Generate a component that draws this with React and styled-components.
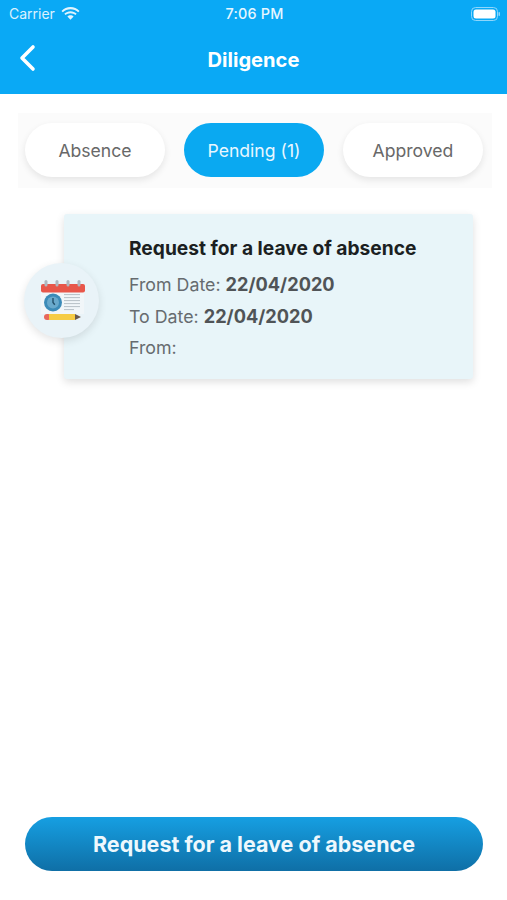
import React from "react";
import styled, { createGlobalStyle } from "styled-components";

const Global = createGlobalStyle`
  html, body { margin: 0; padding: 0; background: #fff; }
  body { font-family: Inter, "Liberation Sans", sans-serif; }
`;
const Page = styled.div`
  width: 507px; height: 900px; display: flex; flex-direction: column; background: #fff; overflow: hidden;
`;
const Header = styled.header`
  height: 94px; flex: none; background: #0aa9f5; color: #fff; display: flex; flex-direction: column;
`;
const StatusBar = styled.div`
  height: 27px; display: grid; grid-template-columns: 1fr auto 1fr; align-items: center; padding: 0 7px 0 9px;
  font-size: 14px; color: #e6f6ff;
`;
const Carrier = styled.div`display: flex; align-items: center; gap: 6px; font-size: 14px; opacity: .95;`;
const Clock = styled.div`font-weight: 500; font-size: 14.4px; letter-spacing: .2px;`;
const Battery = styled.div`justify-self: end; display: flex;`;
const NavBar = styled.div`
  height: 67px; display: flex; align-items: center; justify-content: center; position: relative;
  font-size: 20.1px; font-weight: 700; padding-bottom: 1px; box-sizing: border-box;
`;
const Back = styled.svg`position: absolute; left: 18px; top: 17px;`;
const TabStrip = styled.div`
  margin: 19px 15px 0 18px; height: 75px; padding: 10px 9px 0 7px; box-sizing: border-box;
  background: #fbfbfb; display: flex; justify-content: space-between;
`;
const Tab = styled.div`
  width: 140px; height: 54px; border-radius: 27px; display: flex; align-items: center; justify-content: center;
  font-size: 17.6px; background: ${p => (p.$active ? "#0aa9f1" : "#fff")}; color: ${p => (p.$active ? "#e8f7ff" : "#686868")};
  box-shadow: ${p => (p.$active ? "none" : "0 3px 7px rgba(0,0,0,.09)")};
`;
const Item = styled.div`position: relative; margin: 26px 34px 0 64px;`;
const Card = styled.div`
  height: 165px; background: #e8f5f9; border-radius: 3px; padding: 21px 0 0 65px; box-sizing: border-box;
  box-shadow: 0 3px 9px rgba(0,0,0,.13); display: flex; flex-direction: column;
`;
const Title = styled.div`font-size: 19.2px; font-weight: 700; color: #1b1f22; line-height: 26px; margin-bottom: 8px;`;
const Line = styled.div`font-size: 17.8px; color: #666b6f; line-height: 31.5px;`;
const Value = styled.b`font-weight: 700; color: #505457; font-size: 18.2px;`;
const Avatar = styled.div`
  position: absolute; left: -40px; top: 49px; width: 75px; height: 75px; border-radius: 50%;
  background: #e9f3f8; box-shadow: 0 3px 9px rgba(0,0,0,.11); display: flex; align-items: center; justify-content: center;
`;
const Spacer = styled.div`flex: 1;`;
const Submit = styled.div`
  margin: 0 24px 29px 25px; height: 54px; border-radius: 27px; display: flex; align-items: center; justify-content: center;
  font-size: 21.5px; font-weight: 700; color: #eef8fd;
  background: linear-gradient(#169fe2, #0f6fa6);
`;

function CalendarIcon() {
  return (
    <svg width="46" height="42" viewBox="0 0 46 42">
      <rect x="2" y="10" width="43" height="24" fill="#f1f6f9" />
      <rect x="2" y="4" width="44" height="8.500" rx="2" fill="#e8564a" />
      {[7, 18, 29, 40].map(x => (
        <rect key={x} x={x - 1.500} y="0" width="3" height="6.500" rx="1.500" fill="#aeb8c0" />
      ))}
      <circle cx="14" cy="22.500" r="9" fill="#3c8bb8" />
      <circle cx="14" cy="22.500" r="6" fill="#69a9cc" />
      <path d="M14 18v4.500l1.800 2.200" stroke="#23506b" strokeWidth="1.400" fill="none" />
      {[14, 17, 20, 23, 26, 29].map((y, i) => (
        <rect key={y} x="25" y={y} width={i === 5 ? 10 : 16} height="1.100" fill="#bcc5cb" />
      ))}
      <rect x="5" y="34" width="7" height="6" rx="3" fill="#e8675c" />
      <rect x="10" y="34" width="26" height="6" fill="#f6cc45" />
      <path d="M36 34l6 3-6 3z" fill="#6a5a4c" />
    </svg>
  );
}

export default function App() {
  return (
    <Page>
      <Global />
      <Header>
        <StatusBar>
          <Carrier>
            Carrier
            <svg width="19" height="14" viewBox="0 0 19 14" fill="#eef9ff">
              <path d="M9.500 2.200c3 0 5.700 1.200 7.700 3.100l1.300-1.400C16.100 1.600 13 0 9.500 0S2.900 1.600.5 3.900l1.300 1.400c2-1.900 4.700-3.100 7.700-3.100z" />
              <path d="M9.500 6.200c1.900 0 3.600.7 4.900 1.900l1.300-1.400C14 5.100 11.900 4.200 9.500 4.200S5 5.100 3.300 6.700l1.300 1.400c1.300-1.200 3-1.900 4.900-1.900z" />
              <path d="M9.500 8.200c-1.200 0-2.300.5-3.100 1.200l3.100 3.400 3.100-3.400c-.8-.7-1.900-1.200-3.100-1.200z" />
            </svg>
          </Carrier>
          <Clock>7:06 PM</Clock>
          <Battery>
            <svg width="29" height="14" viewBox="0 0 29 14">
              <rect x=".5" y=".5" width="26" height="13" rx="4" fill="none" stroke="#8fd6fb" />
              <rect x="2.500" y="2.500" width="22" height="9" rx="2.500" fill="#fff" />
              <rect x="27.500" y="5" width="1.500" height="4" rx=".7" fill="#8fd6fb" />
            </svg>
          </Battery>
        </StatusBar>
        <NavBar>
          <Back width="20" height="28" viewBox="0 0 20 28" fill="none">
            <path d="M15 3L4 14l11 11" stroke="#fff" strokeWidth="3.600" strokeLinecap="round" strokeLinejoin="round" />
          </Back>
          Diligence
        </NavBar>
      </Header>
      <TabStrip>
        <Tab>Absence</Tab>
        <Tab $active>Pending (1)</Tab>
        <Tab>Approved</Tab>
      </TabStrip>
      <Item>
        <Card>
          <Title>Request for a leave of absence</Title>
          <Line>From Date: <Value>22/04/2020</Value></Line>
          <Line>To Date: <Value>22/04/2020</Value></Line>
          <Line>From:</Line>
        </Card>
        <Avatar><CalendarIcon /></Avatar>
      </Item>
      <Spacer />
      <Submit>Request for a leave of absence</Submit>
    </Page>
  );
}
